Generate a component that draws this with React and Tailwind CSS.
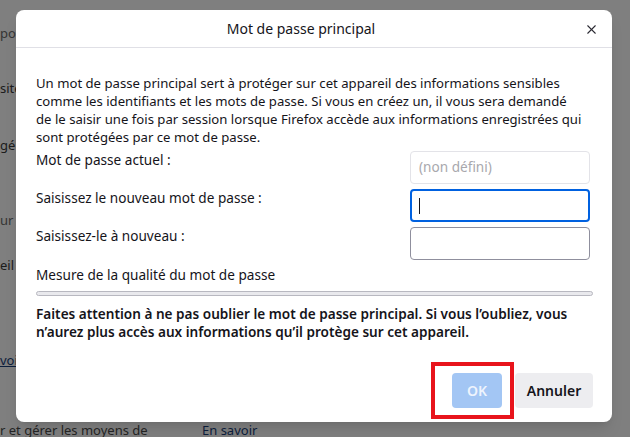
import { X } from "lucide-react";

function Field({ label, children }) {
    return (
        <div className="flex items-start justify-between">
            <span className="leading-[18px] text-[13.6px]">{label}</span>
            {children}
        </div>
    );
}

function BackgroundPage() {
    return (
        <div className="flex flex-col text-[13px] text-[#3b3b3b] leading-[18px] whitespace-nowrap">
            <div className="mt-[24px] text-[#6b6b6b]">po</div>
            <div className="mt-[37px]">site</div>
            <div className="mt-[39px]">gé</div>
            <div className="mt-[57px] text-[#6b6b6b]">ur l</div>
            <div className="mt-[27px]">eil</div>
            <div className="mt-[77px] text-[#1a3f7a] underline">voir</div>
            <div className="mt-[52px] flex">
                <span className="w-[202px] text-[#4a4a4a]">r et gérer les moyens de</span>
                <span className="text-[#1a3f7a]">En savoir</span>
            </div>
        </div>
    );
}

export default function App() {
    return (
        <div className="relative w-[630px] h-[437px] overflow-hidden bg-[#ffffff] font-['Noto_Sans',sans-serif]">
            <BackgroundPage />
            <div className="absolute inset-0 bg-black/50" />

            <div className="absolute left-[16px] top-[10px] w-[596px] h-[412px] bg-white rounded-lg shadow-lg flex flex-col text-[#15141a]">
                <div className="relative h-[38px] flex items-center justify-center pr-[26px] border-b border-[#e0e0e6]">
                    <span className="text-[14px]">Mot de passe principal</span>
                    <X className="absolute right-[13px] top-[12px] w-[15px] h-[15px] text-[#2b2a33]" strokeWidth={1.7} />
                </div>

                <div className="flex flex-col pl-[20px] pr-[22px] pt-[26px] text-[13px]">
                    <p className="leading-[18px] text-[13.15px]">
                        Un mot de passe principal sert à protéger sur cet appareil des informations sensibles<br />
                        comme les identifiants et les mots de passe. Si vous en créez un, il vous sera demandé<br />
                        de le saisir une fois par session lorsque Firefox accède aux informations enregistrées qui<br />
                        sont protégées par ce mot de passe.
                    </p>

                    <div className="flex flex-col gap-[5px] mt-[5px]">
                        <Field label="Mot de passe actuel :">
                            <div className="w-[180px] h-[33px] rounded border border-[#e3e3e8] px-[8px] flex items-center text-[13.6px] text-[#a8a8ad]">
                                (non défini)
                            </div>
                        </Field>
                        <Field label="Saisissez le nouveau mot de passe :">
                            <div className="w-[180px] h-[33px] rounded border-2 border-[#0061e0] px-[7px] flex items-center">
                                <span className="w-px h-[16px] bg-[#15141a]" />
                            </div>
                        </Field>
                        <Field label="Saisissez-le à nouveau :">
                            <div className="w-[180px] h-[33px] rounded border border-[#8f8f9d]" />
                        </Field>
                    </div>

                    <div className="mt-[6px] leading-[18px] text-[13.6px]">Mesure de la qualité du mot de passe</div>
                    <div className="mt-[7px] h-[5px] mr-[-3px] rounded-full border border-[#b8b8c0] bg-[#e9e9ed]" />

                    <p className="mt-[9px] leading-[18px] text-[13.6px] font-semibold">
                        Faites attention à ne pas oublier le mot de passe principal. Si vous l’oubliez, vous<br />
                        n’aurez plus accès aux informations qu’il protège sur cet appareil.
                    </p>
                </div>

                <div className="mt-auto flex justify-end gap-[13px] pr-[19px] pb-[14px] text-[14px] font-semibold">
                    <button className="w-[50px] h-[35px] rounded bg-[#a3c6f4] text-[#eef4fd]">OK</button>
                    <button className="w-[78px] h-[35px] rounded bg-[#ededf0] text-[#15141a]">Annuler</button>
                </div>
            </div>

            <div className="absolute left-[431px] top-[362px] w-[83px] h-[57px] border-4 border-[#e8141c]" />
        </div>
    );
}
